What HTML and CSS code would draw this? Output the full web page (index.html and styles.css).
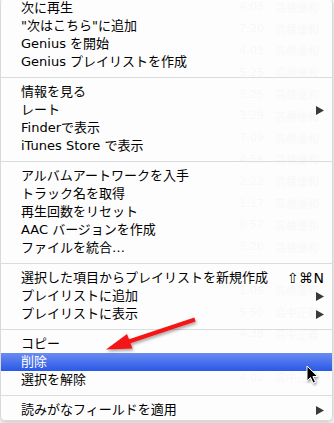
FILE: index.html
```html
<!DOCTYPE html>
<html lang="ja">
<head>
<meta charset="utf-8">
<link rel="stylesheet" href="styles.css">
</head>
<body>
<div class="screen">
  <div class="table">
    <div class="trow"><span class="time">4:03</span><span class="name">高橋優和</span></div>
    <div class="trow"><span class="time">7:20</span><span class="name">高橋優和</span></div>
    <div class="trow"><span class="time">4:03</span><span class="name">高橋優和</span></div>
    <div class="trow"><span class="time">5:25</span><span class="name">高橋優和</span></div>
    <div class="trow"><span class="time">3:25</span><span class="name">高橋優和</span></div>
    <div class="trow"><span class="time">3:29</span><span class="name">高橋優和</span></div>
    <div class="trow"><span class="time">7:09</span><span class="name">高橋優和</span></div>
    <div class="trow"><span class="time">4:56</span><span class="name">高橋優和</span></div>
    <div class="trow"><span class="time">2:22</span><span class="name">高橋優和</span></div>
    <div class="trow"><span class="time">1:17</span><span class="name">高橋優和</span></div>
    <div class="trow"><span class="time">0:57</span><span class="name">高橋優和</span></div>
    <div class="trow"><span class="time">3:20</span><span class="name">高橋優和</span></div>
    <div class="trow"><span class="time"></span><span class="name"></span></div>
    <div class="trow"><span class="time">1:06</span><span class="name">高橋優和</span></div>
    <div class="trow"><span class="time">5:50</span><span class="name">高中正義</span></div>
    <div class="trow"><span class="time">4:38</span><span class="name">高中正義</span></div>
    <div class="trow"><span class="time"></span><span class="name"></span></div>
    <div class="trow"><span class="time">4:02</span><span class="name">高中正義</span></div>
    <div class="trow"><span class="time"></span><span class="name"></span></div>
  </div>

  <div class="menu">
    <div class="item">次に再生</div>
    <div class="item">"次はこちら"に追加</div>
    <div class="item">Genius を開始</div>
    <div class="item">Genius プレイリストを作成</div>
    <div class="sep"></div>
    <div class="item">情報を見る</div>
    <div class="item"><span>レート</span><svg class="sub" width="8" height="9" viewBox="0 0 8 9"><polygon points="0,0 8,4.5 0,9"/></svg></div>
    <div class="item">Finderで表示</div>
    <div class="item">iTunes Store で表示</div>
    <div class="sep"></div>
    <div class="item">アルバムアートワークを入手</div>
    <div class="item">トラック名を取得</div>
    <div class="item">再生回数をリセット</div>
    <div class="item">AAC バージョンを作成</div>
    <div class="item">ファイルを統合…</div>
    <div class="sep"></div>
    <div class="item"><span>選択した項目からプレイリストを新規作成</span><span class="key">⇧⌘N</span></div>
    <div class="item"><span>プレイリストに追加</span><svg class="sub" width="8" height="9" viewBox="0 0 8 9"><polygon points="0,0 8,4.5 0,9"/></svg></div>
    <div class="item"><span>プレイリストに表示</span><svg class="sub" width="8" height="9" viewBox="0 0 8 9"><polygon points="0,0 8,4.5 0,9"/></svg></div>
    <div class="sep"></div>
    <div class="item">コピー</div>
    <div class="item hl">削除</div>
    <div class="item">選択を解除</div>
    <div class="sep"></div>
    <div class="item"><span>読みがなフィールドを適用</span><svg class="sub" width="8" height="9" viewBox="0 0 8 9"><polygon points="0,0 8,4.5 0,9"/></svg></div>
  </div>

  <svg class="overlay" width="334" height="423" viewBox="0 0 334 423">
    <defs>
      <filter id="sh" x="-20%" y="-50%" width="140%" height="200%">
        <feDropShadow dx="1" dy="2" stdDeviation="1.5" flood-color="#000" flood-opacity="0.35"/>
      </filter>
      <filter id="csh" x="-50%" y="-50%" width="200%" height="200%">
        <feDropShadow dx="1" dy="1.5" stdDeviation="1" flood-color="#000" flood-opacity="0.4"/>
      </filter>
    </defs>
    <g filter="url(#sh)">
      <line x1="195" y1="319.5" x2="126" y2="342.5" stroke="#f41414" stroke-width="4"/>
      <polygon points="106,349.5 127,334 132.5,348.5" fill="#f41414"/>
    </g>
    <g transform="translate(306.5 365.5)" filter="url(#csh)">
      <path d="M0.5,0.5 L0.5,15.5 L4,12 L6.6,17.6 L9,16.6 L6.4,11 L11.2,11 Z" fill="#000" stroke="#fff" stroke-width="1" stroke-linejoin="round"/>
    </g>
  </svg>
</div>
</body>
</html>
```

FILE: styles.css
```css
html, body {
  margin: 0;
  padding: 0;
}

body {
  width: 334px;
  height: 423px;
  overflow: hidden;
  background: #fafafa;
  font-family: "DejaVu Sans", "Noto Sans CJK JP", sans-serif;
}

.screen {
  position: relative;
  width: 334px;
  height: 423px;
  overflow: hidden;
  background: #fbfbfb;
}

/* faint table behind the translucent menu */
.table {
  margin-top: -4px;
  font-size: 11px;
  color: #c2c2c2;
}

.trow {
  height: 21.8px;
  display: grid;
  grid-template-columns: 34px 1fr;
  align-items: center;
  padding-left: 230px;
  white-space: nowrap;
}

.time {
  text-align: right;
}

.name {
  padding-left: 11px;
}

/* context menu */
.menu {
  position: absolute;
  left: 0;
  top: -2px;
  width: 333px;
  box-sizing: border-box;
  padding: 0 0 1px;
  background: rgba(253, 253, 253, 0.9);
  border: 1px solid rgba(0, 0, 0, 0.14);
  border-radius: 5px;
  box-shadow: 0 2px 6px rgba(0, 0, 0, 0.22);
  font-size: 13px;
  color: #000;
}

.item {
  height: 18px;
  line-height: 18px;
  padding: 0 8px 0 20px;
  display: flex;
  align-items: center;
  justify-content: space-between;
  white-space: nowrap;
}

.item.hl {
  background: linear-gradient(#6a8cf1, #2a58e7);
  color: #fff;
}

.sub {
  fill: #3a3a3a;
  flex: none;
}

.key {
  font-size: 14px;
  letter-spacing: 0.5px;
  margin-right: -0.5px;
}

.sep {
  height: 12px;
  display: flex;
  align-items: center;
}

.sep::after {
  content: "";
  flex: 1;
  height: 1px;
  background: #dcdcdc;
}

.overlay {
  position: absolute;
  left: 0;
  top: 0;
  pointer-events: none;
}
```
